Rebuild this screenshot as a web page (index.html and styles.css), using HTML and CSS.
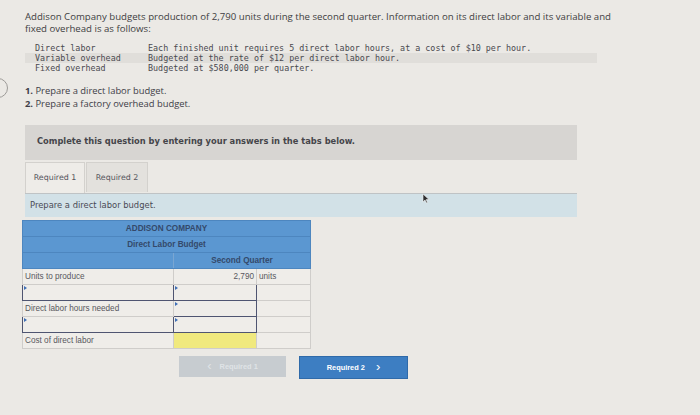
FILE: index.html
```html
<!DOCTYPE html>
<html>

<head>
    <title>Direct Labor Budget</title>
    <link rel="stylesheet" href="styles.css">
</head>

<body>
    <div class="edgeCircle"></div>
    <svg class="pointer" width="8" height="11" viewBox="0 0 8 11">
        <path d="M1 1 L1 9 L3 7 L4.5 10 L5.5 9.5 L4.2 6.6 L7 6.6 Z" fill="#2e2e30" stroke="#f4f4f4" stroke-width="0.6" />
    </svg>
    <div class="page">
        <p class="intro">Addison Company budgets production of 2,790 units during the second quarter. Information on its direct labor and its variable and fixed overhead is as follows:</p>

        <table class="facts">
            <tr>
                <td class="factName">Direct labor</td>
                <td>Each finished unit requires 5 direct labor hours, at a cost of $10 per hour.</td>
            </tr>
            <tr class="stripe">
                <td class="factName">Variable overhead</td>
                <td>Budgeted at the rate of $12 per direct labor hour.</td>
            </tr>
            <tr>
                <td class="factName">Fixed overhead</td>
                <td>Budgeted at $580,000 per quarter.</td>
            </tr>
        </table>

        <ol class="tasks">
            <li><b>1.</b> Prepare a direct labor budget.</li>
            <li><b>2.</b> Prepare a factory overhead budget.</li>
        </ol>

        <div class="notice">Complete this question by entering your answers in the tabs below.</div>

        <div class="tabs">
            <span class="tab active">Required 1</span>
            <span class="tab">Required 2</span>
        </div>
        <div class="prompt">Prepare a direct labor budget.</div>

        <table class="budget">
            <tr class="head">
                <td colspan="3">ADDISON COMPANY</td>
            </tr>
            <tr class="head">
                <td colspan="3">Direct Labor Budget</td>
            </tr>
            <tr class="head">
                <td class="blank"></td>
                <td colspan="2">Second Quarter</td>
            </tr>
            <tr>
                <td class="label">Units to produce</td>
                <td class="num">2,790</td>
                <td class="unit">units</td>
            </tr>
            <tr>
                <td class="entry"><span class="flag"></span></td>
                <td class="entry"><span class="flag"></span></td>
                <td></td>
            </tr>
            <tr>
                <td class="label">Direct labor hours needed</td>
                <td class="entry"><span class="flag"></span></td>
                <td></td>
            </tr>
            <tr>
                <td class="entry"><span class="flag"></span></td>
                <td class="entry"><span class="flag"></span></td>
                <td></td>
            </tr>
            <tr>
                <td class="label">Cost of direct labor</td>
                <td class="total"></td>
                <td></td>
            </tr>
        </table>

        <div class="nav">
            <span class="navBtn off"><span class="chev">&lsaquo;</span>Required 1</span>
            <span class="navBtn on">Required 2<span class="chev after">&rsaquo;</span></span>
        </div>
    </div>
</body>

</html>
```

FILE: styles.css
```css
body {
    margin: 0;
    background: #ebe9e5;
    color: #3b3b3d;
    font-family: 'Open Sans', 'Liberation Sans', Arial, sans-serif;
    width: 700px;
    height: 415px;
    overflow: hidden;
}

.page {
    padding: 11px 0 0 25px;
}

/* half cut circle on the left edge */
.edgeCircle {
    position: absolute;
    left: -12px;
    top: 78px;
    width: 18px;
    height: 18px;
    border: 1px solid #9d9b98;
    border-radius: 50%;
}

/* mouse pointer caught in the shot */
.pointer {
    position: absolute;
    left: 422px;
    top: 193px;
}

.intro {
    margin: 0;
    width: 605px;
    font-size: 9.65px;
    line-height: 11.5px;
    color: #3e3e42;
}

.facts {
    margin: 9px 0 0 0;
    width: 572px;
    border-collapse: collapse;
    font-family: 'DejaVu Sans Mono', 'Liberation Mono', monospace;
    font-size: 8.4px;
    line-height: 10px;
    color: #4a4a50;
}

.facts td {
    padding: 0;
    white-space: nowrap;
}

.facts .factName {
    width: 113px;
    padding-left: 10px;
}

.stripe {
    background: #e0deda;
}

.tasks {
    list-style: none;
    margin: 12px 0 0 0;
    padding: 0;
    font-size: 9.4px;
    line-height: 12.5px;
    color: #3e3e48;
}

.notice {
    margin-top: 15px;
    width: 540px;
    height: 35px;
    padding-left: 12px;
    background: #d7d5d2;
    font-family: 'DejaVu Sans', Verdana, sans-serif;
    font-weight: bold;
    font-size: 8.3px;
    line-height: 33px;
    color: #45454a;
}

.tabs {
    display: flex;
    margin-top: 2px;
    height: 31px;
}

.tab {
    width: 60px;
    height: 30px;
    box-sizing: border-box;
    border: 1px solid #d3d1cd;
    border-bottom: none;
    text-align: center;
    font-family: 'DejaVu Sans', Verdana, sans-serif;
    font-size: 7.9px;
    line-height: 30px;
    color: #55555c;
    background: #e3e1dd;
}

.tab.active {
    background: #eeece8;
    height: 31px;
    margin-right: 1px;
}

.tab + .tab {
    width: 62px;
}

.prompt {
    width: 547px;
    height: 23px;
    padding-left: 5px;
    border-top: 1px solid #bfc3c5;
    background: #d2e1e7;
    font-family: 'DejaVu Sans', Verdana, sans-serif;
    font-size: 8.4px;
    line-height: 22px;
    color: #4a4a55;
}

.budget {
    margin: 3px 0 0 -3px;
    width: 289px;
    border-collapse: collapse;
    font-family: 'Liberation Sans', Arial, sans-serif;
    font-size: 8.2px;
    color: #58585e;
}

.budget td {
    height: 15px;
    padding: 0 2px;
    border: 1px solid #cfcdca;
    background: #efede9;
}

.budget td:first-child {
    width: 146px;
}

.budget td:nth-child(2) {
    width: 78px;
}

.budget .head td {
    height: 15px;
    background: #5b97d1;
    border-color: #4d86bf;
    color: #34496a;
    font-weight: bold;
    text-align: center;
}

.budget .head td.blank {
    border-right-color: #7aa6d2;
}

.budget .num {
    text-align: right;
}

.budget .unit {
    padding-left: 2px;
}

.budget td.entry {
    position: relative;
    border: 1.5px solid #4f5571;
}

.flag {
    position: absolute;
    left: 1px;
    top: 1px;
    border-left: 3px solid #3f6fb5;
    border-top: 2px solid transparent;
    border-bottom: 2px solid transparent;
}

.budget td.total {
    background: #f0e97e;
}

.nav {
    display: flex;
    margin: 7px 0 0 154px;
    gap: 13px;
}

.navBtn {
    display: flex;
    justify-content: center;
    align-items: center;
    width: 107px;
    height: 21px;
    font-family: 'Liberation Sans', Arial, sans-serif;
    font-weight: bold;
    font-size: 7.4px;
}

.chev {
    font-size: 13px;
    font-weight: normal;
    line-height: 10px;
    margin: -2px 8px 0 0;
}

.chev.after {
    margin: -2px 0 0 11px;
}

.navBtn.off {
    background: #c7ccd0;
    color: #dfe3e6;
}

.navBtn.on {
    background: #3d7ec2;
    color: #ffffff;
    border: 1px solid #2f6aa9;
}
```
